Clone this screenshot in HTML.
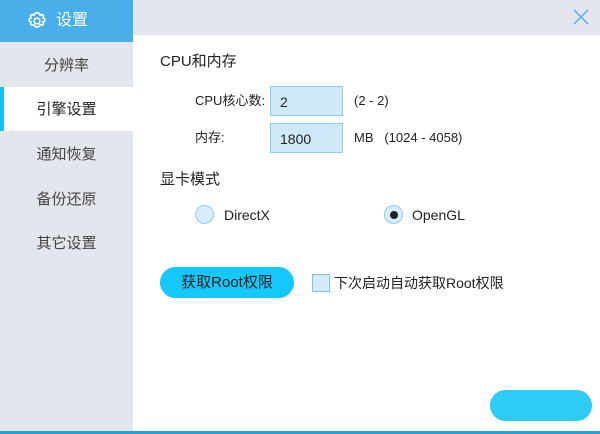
<!DOCTYPE html>
<html><head><meta charset="utf-8"><style>
*{margin:0;padding:0;box-sizing:border-box}
body{width:600px;height:434px;overflow:hidden;background:#fff;font-family:"Liberation Sans","Noto Sans CJK SC",sans-serif;position:relative;color:#222}
.a{position:absolute}
.side{left:0;top:0;width:133px;height:434px;background:#e4e6ee}
.top{left:133px;top:0;width:467px;height:35px;background:#e4e6ee}
.head{left:0;top:0;width:133px;height:42px;background:#4aaee9;color:#fff;font-size:16px;line-height:42px;padding-left:56px}
.item{left:0;width:133px;height:44px;line-height:46px;text-align:center;font-size:15px;color:#444}
.act{background:#fff;color:#222}
.bar{left:0;top:87px;width:4px;height:44px;background:#15c3f5}
.t{font-size:14px}
.l{height:20px;line-height:20px}
.in{width:73px;height:30px;background:#cfe9fb;border:1px solid #8fcdf2;font-size:14px;line-height:30px;padding-left:9px}
.radio{width:19px;height:19px;border-radius:50%;background:#d7ecfb;border:1.5px solid #8fcdf2}
</style></head><body>
<div class="a side"></div>
<div class="a top"></div>
<div class="a head">设置</div>
<svg class="a" style="left:26px;top:10px" width="22" height="22" viewBox="0 0 20 20"><path d="M10 2.5l2 .5.7 1.8 1.8-.8 1.6 1.4-.8 1.8 1.8.8v2l-1.8.8.8 1.8-1.6 1.4-1.8-.8-.7 1.8-2 .5-2-.5-.7-1.8-1.8.8-1.6-1.4.8-1.8-1.8-.8v-2l1.8-.8-.8-1.8 1.6-1.4 1.8.8.7-1.8z" fill="none" stroke="#fff" stroke-width="1.4"/><circle cx="10" cy="10" r="2.6" fill="none" stroke="#fff" stroke-width="1.4"/></svg>
<div class="a item" style="top:43px">分辨率</div>
<div class="a item act" style="top:87px">引擎设置</div>
<div class="a bar"></div>
<div class="a item" style="top:132px">通知恢复</div>
<div class="a item" style="top:177px">备份还原</div>
<div class="a item" style="top:221px">其它设置</div>
<svg class="a" style="left:573px;top:9px" width="16" height="16" viewBox="0 0 16 16"><path d="M1 1L15 15M15 1L1 15" stroke="#5aaee6" stroke-width="1.5"/></svg>
<div class="a t l" style="left:160px;top:52px;font-size:15px">CPU和内存</div>
<div class="a t l" style="left:195px;top:91px;font-size:13px">CPU核心数:</div>
<div class="a in" style="left:270px;top:86px">2</div>
<div class="a t l" style="left:354px;top:91px;font-size:13px">(2 - 2)</div>
<div class="a t l" style="left:195px;top:128px;font-size:13px">内存:</div>
<div class="a in" style="left:270px;top:123px">1800</div>
<div class="a t l" style="left:354px;top:128px;font-size:13px">MB&nbsp;&nbsp;&nbsp;(1024 - 4058)</div>
<div class="a t l" style="left:160px;top:170px;font-size:15px">显卡模式</div>
<div class="a radio" style="left:195px;top:205px"></div>
<div class="a t l" style="left:224px;top:205px">DirectX</div>
<div class="a radio" style="left:384px;top:205px"></div>
<div class="a" style="left:389.5px;top:210.5px;width:8px;height:8px;border-radius:50%;background:#222"></div>
<div class="a t l" style="left:412px;top:205px">OpenGL</div>
<div class="a" style="left:160px;top:267px;width:134px;height:31px;border-radius:16px;background:#14c8fb;text-align:center;line-height:31px;font-size:15px">获取Root权限</div>
<div class="a" style="left:312px;top:274px;width:18px;height:18px;background:#d3ebfb;border:1px solid #7fc3ee"></div>
<div class="a t l" style="left:334px;top:273px">下次启动自动获取Root权限</div>
<div class="a" style="left:490px;top:390px;width:102px;height:31px;border-radius:16px;background:#2ecbf4"></div>
<div class="a" style="left:0;top:431px;width:600px;height:3px;background:#2a9fd8"></div>
</body></html>
